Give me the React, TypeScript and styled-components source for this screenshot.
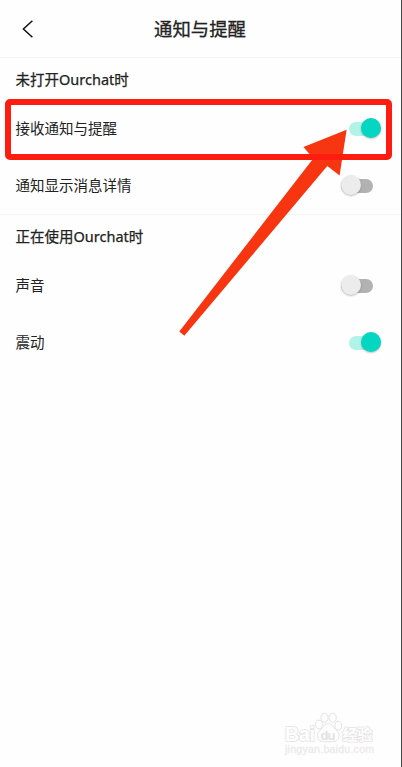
import React from 'react';
import styled, { createGlobalStyle } from 'styled-components';

const GlobalStyle = createGlobalStyle`
  * { box-sizing: border-box; }
  body { margin: 0; background: #fefefe; }
`;

const Screen = styled.main`
  position: relative;
  width: 402px;
  height: 767px;
  overflow: hidden;
  background: #fefefe;
  border-right: 1px solid #47484b;
  color: #222;
  font-family: 'Noto Sans CJK SC', 'Noto Sans', sans-serif;
`;

const Header = styled.header`
  display: grid;
  grid-template-columns: 56px 1fr 56px;
  align-items: center;
  height: 58px;
  border-bottom: 1px solid #f6f6f6;
`;

const BackButton = styled.button`
  display: flex;
  padding: 0 0 0 20px;
  border: 0;
  background: none;
  color: #111;
`;

const Title = styled.h1`
  margin: 0 1px 1px 0;
  text-align: center;
  font-size: 18.4px;
  line-height: 28px;
  font-weight: 400;
  -webkit-text-stroke: 0.3px #222;
  color: #222;
`;

const Section = styled.section<{ $divided?: boolean }>`
  border-bottom: ${p => (p.$divided ? '1px solid #f3f3f3' : '0')};
`;

const SectionTitle = styled.h2`
  display: flex;
  align-items: center;
  height: 42px;
  margin: 0;
  padding: 0 16px 0 15.5px;
  font-family: 'Noto Sans', 'Noto Sans CJK SC', sans-serif;
  font-size: 14.5px;
  line-height: 20px;
  font-weight: 400;
  -webkit-text-stroke: 0.25px #222;
`;

const Row = styled.div`
  display: flex;
  align-items: center;
  justify-content: space-between;
  height: 57px;
  padding: 0 20px 0 15.5px;
  font-size: 14.5px;
  line-height: 21px;
`;

const Label = styled.span`
  padding-bottom: 2px;
`;

const Track = styled.button<{ $on: boolean }>`
  display: flex;
  align-items: center;
  justify-content: ${p => (p.$on ? 'flex-end' : 'flex-start')};
  width: 32px;
  height: 14px;
  margin: 0 ${p => (p.$on ? '0' : '8px')} 0 0;
  padding: 0;
  border: 0;
  border-radius: 7px;
  background: ${p => (p.$on ? '#b2f3e8' : '#b2b2b2')};
`;

const Thumb = styled.span<{ $on: boolean }>`
  flex: none;
  width: 20px;
  height: 20px;
  margin-bottom: 1px;
  border-radius: 50%;
  background: ${p => (p.$on ? '#04d6c1' : '#ececec')};
  box-shadow: 0 1px 2px rgba(0, 0, 0, 0.25);
`;

const Highlight = styled.div`
  position: absolute;
  left: 5px;
  top: 99px;
  width: 387px;
  height: 61px;
  border: 6px solid #ff1c10;
  border-radius: 5px;
`;

const Overlay = styled.svg`
  position: absolute;
  left: 0;
  top: 0;
`;

const Watermark = styled.svg`
  position: absolute;
  left: 280px;
  top: 708px;
`;

function Switch({ on }: { on: boolean }) {
  return (
    <Track $on={on} role="switch" aria-checked={on}>
      <Thumb $on={on} />
    </Track>
  );
}

type Item = { label: string; on: boolean };

const sections: { title: string; items: Item[] }[] = [
  {
    title: '未打开Ourchat时',
    items: [
      { label: '接收通知与提醒', on: true },
      { label: '通知显示消息详情', on: false },
    ],
  },
  {
    title: '正在使用Ourchat时',
    items: [
      { label: '声音', on: false },
      { label: '震动', on: true },
    ],
  },
];

export default function App() {
  return (
    <>
      <GlobalStyle />
      <Screen>
        <Header>
          <BackButton aria-label="返回">
            <svg width="16" height="20" viewBox="0 0 16 20" fill="none" stroke="currentColor" strokeWidth="1.5">
              <path d="M12.4 1.8 3.4 10l9 8.2" />
            </svg>
          </BackButton>
          <Title>通知与提醒</Title>
        </Header>
        {sections.map((section, i) => (
          <Section key={section.title} $divided={i < sections.length - 1}>
            <SectionTitle>{section.title}</SectionTitle>
            {section.items.map(item => (
              <Row key={item.label}>
                <Label>{item.label}</Label>
                <Switch on={item.on} />
              </Row>
            ))}
          </Section>
        ))}
        <Overlay width="401" height="360" viewBox="0 0 401 360">
          <path d="M346.6 129.8 303.5 147 313.3 158.5 179.3 331.5 184.3 335.8 327.3 166 339.6 175.4Z" fill="#f73510" />
        </Overlay>
        <Highlight />
        <Watermark width="110" height="52" viewBox="0 0 110 52" fill="#fefefe" stroke="#e4e4e4">
          <text x="5" y="32.5" fontSize="19.5" fontFamily="'Liberation Sans', sans-serif" fontWeight="700" textLength="30" strokeWidth="1.6" paintOrder="stroke">Bai</text>
          <ellipse cx="39" cy="16.5" rx="3.4" ry="4.3" />
          <ellipse cx="44.5" cy="9.7" rx="3.6" ry="4.6" />
          <ellipse cx="52.7" cy="9.7" rx="3.6" ry="4.6" />
          <ellipse cx="58.3" cy="17.7" rx="3.3" ry="4.4" />
          <path d="M48.2 15.5c3.5 0 5 3.3 7.3 5.7 3 3 4 5 3.2 8.3-1 4-4.4 4.2-10.5 4.2s-9.5-.2-10.5-4.2c-.8-3.3.2-5.3 3.2-8.3 2.3-2.4 3.8-5.7 7.3-5.7Z" />
          <text x="40.5" y="31.5" fontSize="13" fontFamily="'Liberation Sans', sans-serif" fontWeight="700" textLength="15" fill="#e2e2e2" stroke="none">du</text>
          <text x="62.5" y="32" fontSize="15" fontWeight="700" fontFamily="'Noto Sans CJK SC', sans-serif" textLength="30" strokeWidth="1.6" paintOrder="stroke">经验</text>
          <text x="5" y="45" fontSize="10.5" fontFamily="'Liberation Sans', sans-serif" textLength="89" fill="#e8e8e8" stroke="#ededed" strokeWidth=".3">jingyan.baidu.com</text>
        </Watermark>
      </Screen>
    </>
  );
}
